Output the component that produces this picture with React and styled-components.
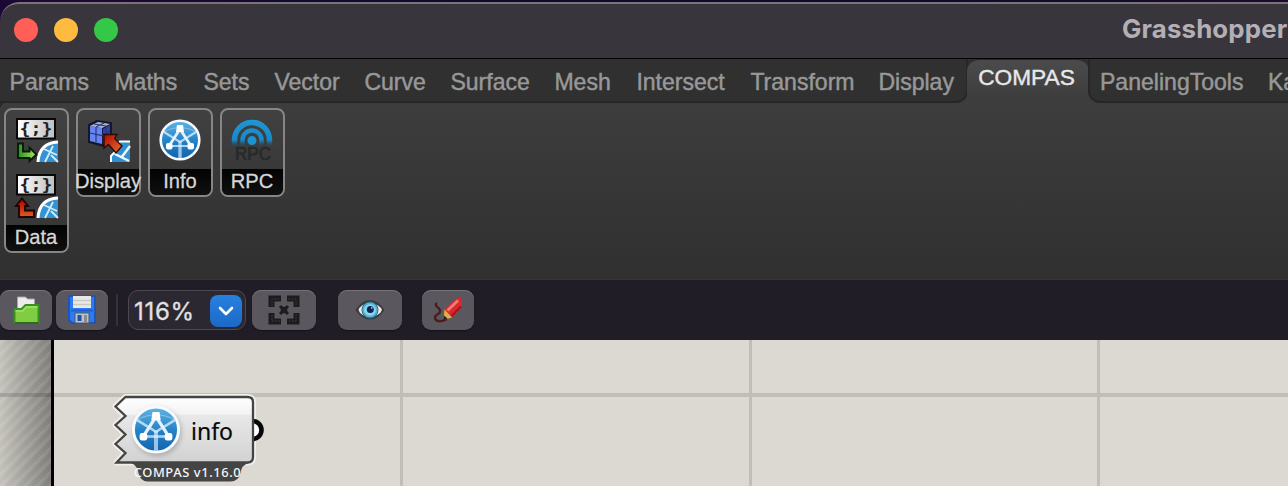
import React from "react";
import styled, { createGlobalStyle } from "styled-components";

const Global = createGlobalStyle`
  * { box-sizing: border-box; }
  body { margin: 0; overflow: hidden; background: #170b2c; }
`;

const sans = `"Liberation Sans", Arial, sans-serif`;
const ui = `Inter, "Noto Sans", sans-serif`;

const Desktop = styled.div`
  width: 1288px;
  height: 486px;
  padding-top: 2px;
  overflow: hidden;
  background: linear-gradient(90deg, #1c0834, #10082c 60%, #1b0a2c);
`;
const Window = styled.div`
  height: 484px;
  display: flex;
  flex-direction: column;
  border-top-left-radius: 19px;
  overflow: hidden;
`;
const TitleBar = styled.header`
  height: 57px;
  flex: none;
  display: flex;
  align-items: center;
  justify-content: space-between;
  padding: 0 0 2px 14px;
  white-space: nowrap;
  background: #39353c;
  border-top: 2px solid #77747a;
  border-top-left-radius: 19px;
  border-bottom: 1px solid #020202;
`;
const Lights = styled.div`
  display: flex;
  gap: 16px;
`;
const Light = styled.span`
  width: 24px;
  height: 24px;
  border-radius: 50%;
  background: ${(p) => p.$color};
`;
const Title = styled.h1`
  margin: 0;
  padding-bottom: 2px;
  width: 166px;
  font: 700 25.8px/32px ${ui};
  letter-spacing: 0.15px;
  color: #b3afb6;
`;

const TabBar = styled.nav`
  height: 44px;
  flex: none;
  display: flex;
  background: #3d3d3d;
`;
const TabGroup = styled.div`
  display: flex;
  flex: none;
  width: ${(p) => p.$width}px;
  overflow: hidden;
  background: #303030;
  border: 0 solid #272727;
  border-bottom-width: 2px;
  ${(p) =>
    p.$side === "left"
      ? "border-right-width: 2px; border-bottom-right-radius: 12px;"
      : "border-left-width: 2px; border-bottom-left-radius: 12px;"}
`;
const Tab = styled.button`
  flex: none;
  width: ${(p) => p.$width}px;
  padding: 0 0 0 ${(p) => p.$inset || 0}px;
  border: 0;
  background: none;
  text-align: left;
  white-space: nowrap;
  color: #989898;
  font: 23.05px/46px ${sans};
  -webkit-text-stroke: 0.45px #989898;
`;
const ActiveSlot = styled.div`
  width: 120px;
  flex: none;
  background: linear-gradient(#303030 24px, #3d3d3d 24px);
`;
const ActiveTab = styled.button`
  width: 122px;
  height: 44px;
  margin: 0 -1px;
  padding: 0 3px 9px 0;
  border: 0;
  border-top: 1px solid #292929;
  border-radius: 12px 12px 0 0;
  background: linear-gradient(#4b4b4b, #3d3d3d 90%);
  color: #e8e8e8;
  font: 22.7px/34px ${sans};
  -webkit-text-stroke: 0.4px #e8e8e8;
`;

const Ribbon = styled.section`
  height: 177px;
  flex: none;
  display: flex;
  align-items: flex-start;
  gap: 7px;
  padding: 5px 4px;
  background:
    radial-gradient(circle at 8px 6px, transparent 7px, #272727 7.5px 9px, #303030 9.5px) 0 0 / 5px 4px no-repeat,
    linear-gradient(#3d3d3d, #303030);
  border-bottom: 1px solid #353535;
`;
const Panel = styled.div`
  width: 65px;
  flex: none;
  display: flex;
  flex-direction: column;
  align-items: center;
  border: 2px solid #868686;
  border-radius: 8px;
  background: linear-gradient(#414141, #353535);
`;
const PanelIcons = styled.div`
  display: flex;
  flex-direction: column;
  gap: 8px;
  padding: 6px 1px 5px 0;
  svg { display: block; }
`;
const PanelLabel = styled.div`
  height: 26px;
  width: 61px;
  padding-right: 1px;
  display: flex;
  justify-content: center;
  border-radius: 0 0 6px 6px;
  background: linear-gradient(#030303, #101010);
  color: #d6d6d6;
  font: 20.1px/24px ${sans};
  -webkit-text-stroke: 0.3px #d6d6d6;
`;

const Toolbar = styled.div`
  height: 60px;
  flex: none;
  display: flex;
  align-items: center;
  background: #201d26;
`;
const ToolButton = styled.button`
  width: ${(p) => p.$width}px;
  height: 40px;
  flex: none;
  margin-right: ${(p) => p.$gap}px;
  display: flex;
  align-items: center;
  justify-content: center;
  padding: 0;
  border: 0;
  border-radius: 9px;
  background: #5a575e;
  box-shadow: inset 0 1px 0 #747178, 0 1px 1px #15131a;
`;
const Divider = styled.span`
  width: 2px;
  height: 32px;
  margin: 0 10px 0 8px;
  background: #35323b;
`;
const ZoomSelect = styled.div`
  width: 118px;
  height: 40px;
  margin-right: 6px;
  padding: 1px 3px 0 5px;
  display: flex;
  align-items: center;
  justify-content: space-between;
  border: 1px solid #4b4850;
  border-radius: 10px;
  background: #2b2831;
  color: #e1e0e2;
  font: 400 24px/36px ${ui};
  letter-spacing: 0.7px;
  -webkit-text-stroke: 0.3px #e1e0e2;
`;
const ZoomValue = styled.span`
  padding-top: 2px;
`;
const ZoomArrow = styled.span`
  width: 32px;
  height: 32px;
  display: grid;
  place-items: center;
  border-radius: 8px;
  background: linear-gradient(#2880e0, #1c69c6);
`;

const Canvas = styled.main`
  flex: 1;
  display: flex;
  background: #dcd9d2;
`;
const OuterMargin = styled.div`
  width: 54px;
  flex: none;
  border-right: 3px solid #000;
  background:
    linear-gradient(transparent 53px, rgba(0, 0, 0, 0.14) 53px 57px, transparent 57px),
    repeating-linear-gradient(135deg, rgba(255, 255, 255, 0.08) 0 4px, rgba(0, 0, 0, 0.01) 4px 8.5px),
    linear-gradient(90deg, #c5c3bc, #82807b);
`;
const Surface = styled.div`
  flex: 1;
  position: relative;
  background: linear-gradient(transparent 53px, #c1beb8 53px 57px, transparent 57px);
`;
const GridColumns = styled.div`
  height: 100%;
  display: grid;
  grid-template-columns: 349px 349px 348px 1fr;
`;
const GridColumn = styled.div`
  border-right: 3px solid #c1beb8;
  &:last-child { border-right: 0; }
`;
const Node = styled.div`
  position: absolute;
  left: 52px;
  top: 50px;
  width: 170px;
  height: 96px;
`;
const NodeShape = styled.svg`
  position: absolute;
  inset: 0;
`;
const NodeName = styled.span`
  position: absolute;
  left: 85px;
  top: 25px;
  font: 23px/32px "Noto Sans", sans-serif;
  -webkit-text-stroke: 0.2px #080808;
  color: #080808;
`;
const NodeMessage = styled.span`
  position: absolute;
  left: 28px;
  top: 73px;
  width: 107px;
  display: flex;
  justify-content: center;
  overflow: hidden;
  white-space: nowrap;
  font: 500 12.9px/19px "Noto Sans", sans-serif;
  letter-spacing: 0.6px;
  color: #f6f6f6;
`;

function CompasMark({ id }) {
  return (
    <g>
      <circle r="19.3" fill={`url(#${id})`} stroke="#f7fbff" strokeWidth="2.6" />
      <g stroke="#e3f2fc" fill="none">
        <path d="M-17-8 Q0-17 17-8" strokeWidth="1" opacity=".35" />
        <path d="M-16-8 L0 2 L16-8" strokeWidth="2.2" opacity=".75" />
        <path d="M0-11 L-11 6 M0-11 L11 6" strokeWidth="2.8" />
        <path d="M-11 6 H11" strokeWidth="2.2" opacity=".75" />
        <path d="M0 1 V18" strokeWidth="3.4" opacity=".65" />
      </g>
      <g fill="#fff">
        <path d="M-3-15 H3 L4-8 H-4 Z" />
        <rect x="-14" y="3" width="6.5" height="6.5" rx="2" />
        <rect x="7.5" y="3" width="6.5" height="6.5" rx="2" />
      </g>
    </g>
  );
}

function BlueFill({ id }) {
  return (
    <linearGradient id={id} x1="0" y1="0" x2="0" y2="1">
      <stop offset="0" stopColor="#62b5e4" />
      <stop offset=".5" stopColor="#2584c9" />
      <stop offset="1" stopColor="#1262ae" />
    </linearGradient>
  );
}

const Quarter = () => (
  <g>
    <path d="M26 46 Q27 27 46 26 V46 Z" fill="#3493d3" />
    <path d="M26 46 Q27 27 46 26" fill="none" stroke="#fff" strokeWidth="3" />
    <path d="M32 33 L45 39 M41 30 L33 46 M39 39 L46 46" stroke="#d4ecfa" strokeWidth="1.8" />
  </g>
);

function DataIcon({ up }) {
  const id = up ? "redArrow" : "greenArrow";
  return (
    <svg width="48" height="48" viewBox="0 0 48 48">
      <defs>
        <linearGradient id={id} x1="0" y1="0" x2={up ? 0 : 1} y2={up ? 1 : 0}>
          <stop offset="0" stopColor={up ? "#a50000" : "#21941a"} />
          <stop offset="1" stopColor={up ? "#e35b20" : "#b2e36b"} />
        </linearGradient>
        <linearGradient id={`${id}Paper`}>
          <stop offset="0" stopColor="#fff" />
          <stop offset="1" stopColor="#bebebe" />
        </linearGradient>
      </defs>
      <rect x="5" y="3" width="38" height="19.5" fill={`url(#${id}Paper)`} stroke="#080808" strokeWidth="2" />
      <text x="24" y="17.8" textAnchor="middle" textLength="33" lengthAdjust="spacingAndGlyphs" fontFamily="DejaVu Sans Mono, monospace" fontWeight="700" fontSize="16" fill="#222">{"{;}"}</text>
      {up ? (
        <path d="M10 26.5 L16 34 H13 V38.5 H22 V45 H7 V34 H4 Z" fill={`url(#${id})`} stroke="#1d0400" strokeWidth="1.9" />
      ) : (
        <path d="M6 27.5 H11 V35.5 H17.5 V31.5 L24.5 38.5 L17.5 45 V42 H6 Z" fill={`url(#${id})`} stroke="#071c04" strokeWidth="1.9" />
      )}
      <Quarter />
    </svg>
  );
}

const DisplayIcon = () => (
  <svg width="48" height="48" viewBox="0 0 48 48">
    <defs>
      <linearGradient id="pointer" x1="0" y1="0" x2="1" y2="1">
        <stop offset="0" stopColor="#b10800" />
        <stop offset="1" stopColor="#e87030" />
      </linearGradient>
    </defs>
    <path d="M5 9 L13 5 L27 7 V22 L20 30 L5 26 Z" fill="#171b38" stroke="#15182d" strokeWidth="2" />
    <path d="M6 10 L18 12 V28 L6 25 Z" fill="#6685f2" />
    <path d="M6 10 L14 6 L26 8 L18 12 Z" fill="#a9b5d0" />
    <path d="M19 13 L26 9 V22 L19 28 Z" fill="#3041a4" />
    <path d="M12 11 V26 M6 17 L18 19.5 L26 15 M22 11 V25 M10 8 L22 10 M12 11 L20 7" stroke="#273780" strokeWidth="1.2" fill="none" />
    <path d="M27 46 V40 L31 36 V30 L36 25.5 H46 V46 Z" fill="#2f91d3" />
    <path d="M27 46 V40 L31 36 V30 L36 25.5 H46" stroke="#fff" strokeWidth="2" fill="none" />
    <path d="M37 42 L46 30 M31 38 L45 45" stroke="#eff9ff" strokeWidth="2.5" />
    <path d="M20 18.5 L33 18.5 L30.5 22.5 L38 30 L32 37 L24.5 28.5 L20 32 Z" fill="url(#pointer)" stroke="#2b0b04" strokeWidth="1.4" />
  </svg>
);

const InfoIcon = () => (
  <svg width="48" height="48" viewBox="-24 -24 48 48">
    <defs><BlueFill id="infoBlue" /></defs>
    <CompasMark id="infoBlue" />
  </svg>
);

const RpcIcon = () => (
  <svg width="48" height="48" viewBox="0 0 48 48">
    <defs>
      <linearGradient id="signal" gradientUnits="userSpaceOnUse" x1="0" y1="4" x2="0" y2="32">
        <stop offset="0" stopColor="#2196d4" />
        <stop offset=".72" stopColor="#1689c8" />
        <stop offset="1" stopColor="#253a45" stopOpacity="0" />
      </linearGradient>
    </defs>
    <g fill="none" stroke="url(#signal)" strokeWidth="5.5">
      <path d="M6.5 30 V24 A17.5 17.5 0 0 1 41.5 24 V30" />
      <path d="M14.5 30 V24 A9.5 9.5 0 0 1 33.5 24 V30" strokeWidth="4.5" />
    </g>
    <circle cx="24" cy="24.5" r="4.5" fill="#1993d4" />
    <text x="25" y="44" textAnchor="middle" textLength="36" lengthAdjust="spacingAndGlyphs" fontFamily="Liberation Sans, sans-serif" fontSize="18" stroke="#282929" strokeWidth=".7" fill="#282929">RPC</text>
  </svg>
);

const OpenIcon = () => (
  <svg width="27" height="32" viewBox="1.5 0 27 32">
    <path d="M6 14 V3 H14 L16 5 H23 V16 H6 Z" fill="#ececec" stroke="#a5a5a5" />
    <path d="M3 29 V15 H10 L14 11 H27 V29 Z" fill="#80cd43" stroke="#359322" strokeWidth="2" />
    <path d="M4 17 H11 L15 13 H26" stroke="#a4e06b" strokeWidth="1.5" fill="none" />
    <path d="M3 29 H27" stroke="#276f1b" strokeWidth="2" />
  </svg>
);

const SaveIcon = () => (
  <svg width="32" height="32" viewBox="0 0 32 32">
    <path d="M3 2 H29 V29 H6 L3 26 Z" fill="#2c7bf0" stroke="#2054b8" strokeWidth="2" />
    <rect x="7" y="2" width="18" height="12" fill="#e8e8e5" />
    <path d="M7 6.5 H25 M7 10.5 H25" stroke="#c9cac7" strokeWidth="1.5" />
    <path d="M5 16.5 H27" stroke="#1f5ece" strokeWidth="2" />
    <rect x="9" y="19" width="14" height="10" fill="#bfc2c5" stroke="#4b5970" />
    <rect x="11.5" y="21" width="4" height="6" fill="#1653b5" />
    <path d="M19.5 21 V29" stroke="#8a8c90" strokeWidth="3" />
  </svg>
);

const FitIcon = () => (
  <svg width="32" height="32" viewBox="0 0 32 32">
    <g fill="none" stroke="#1c1c1e" strokeWidth="6">
      <path d="M3.5 13 V4.5 H13 M19 4.5 H28.5 V13 M28.5 19 V27.5 H19 M13 27.5 H3.5 V19" />
      <path d="M12 12 L20 20 M20 12 L12 20" strokeWidth="3" />
    </g>
    <rect x="12.8" y="12.8" width="6.4" height="6.4" fill="#1c1c1e" />
    <path d="M4 12 V5 H12 M20 5 H28 V12 M28 20 V27 H20 M12 27 H4 V20" fill="none" stroke="#38373b" strokeWidth="1" strokeDasharray="2 1" />
  </svg>
);

const EyeIcon = () => (
  <svg width="32" height="32" viewBox="0 0 32 32">
    <path d="M1.5 16 Q8 6 16 6 Q24 6 30.5 16 Q24 25.5 16 25.5 Q8 25.5 1.5 16 Z" fill="#39383c" />
    <path d="M4.5 16 Q6 10.5 16 9 Q26 10.5 28 16 Q26 21.5 16 23 Q6 21.5 4.5 16 Z" fill="#ece8e3" />
    <circle cx="16" cy="16" r="8" fill="#52b4d5" stroke="#28718f" />
    <circle cx="16" cy="16" r="5.8" fill="#8bd9f0" />
    <circle cx="16.3" cy="15.5" r="3.5" fill="#0d2450" />
    <circle cx="17.8" cy="14" r="0.8" fill="#e5fbff" />
  </svg>
);

const PencilIcon = () => (
  <svg width="32" height="32" viewBox="0 0 32 32">
    <path d="M5 9 Q2 11 6.5 14 Q10 18 6 20 Q1 23 4 26 Q8 29 15 25" fill="none" stroke="#4a1c1b" strokeWidth="2.4" />
    <path d="M12.5 15.5 L24 5 Q29 2 29.5 5 V13 L20 23.5 Z" fill="#d82a2a" />
    <path d="M15.5 16.5 L26 6.5" stroke="#f47a7a" strokeWidth="2.8" />
    <path d="M19.5 22 L29 12.5" stroke="#a51218" strokeWidth="2.2" />
    <path d="M12.5 15.5 L20 23.5 L11.5 26 Z" fill="#e4ad4b" />
    <path d="M12 21.5 L15.5 24.5 L11 27 Z" fill="#332015" />
  </svg>
);

const bodyPath =
  "M20 7 H142 Q147.5 7 147.5 12 V67 Q147.5 72.5 142 72.5 H11 L20 63 L10 54 L20 44.5 L10 35 L20 26 L10 16.5 Z";
const messagePath =
  "M26 73 H143 Q136 75 135 83 Q133 91.5 125 91.5 H42 Q35 91.5 33 83 Q32 76 26 73 Z";

const InfoNode = () => (
  <Node>
    <NodeShape width="170" height="96" viewBox="0.5 0 170 96">
      <defs>
        <linearGradient id="nodeBody" x1="0" y1="0" x2="0" y2="1">
          <stop offset="0" stopColor="#fff" />
          <stop offset=".26" stopColor="#f3f3f3" />
          <stop offset=".28" stopColor="#e8e8e8" />
          <stop offset="1" stopColor="#d2d2d2" />
        </linearGradient>
        <BlueFill id="nodeBlue" />
        <filter id="soft" x="-30%" y="-30%" width="160%" height="160%">
          <feGaussianBlur stdDeviation="2.5" />
        </filter>
      </defs>
      <path d={bodyPath} fill="none" stroke="#f0efec" strokeWidth="6" strokeLinejoin="round" />
      <circle cx="147" cy="40" r="9" fill="#fff" stroke="#050505" strokeWidth="4.6" />
      <path d={messagePath} fill="#444" />
      <path d={bodyPath} fill="url(#nodeBody)" stroke="#444" strokeWidth="2.3" />
      <circle cx="52" cy="42" r="24" fill="#777" opacity=".45" filter="url(#soft)" />
      <g transform="translate(50.5 39.5) scale(1.17)"><CompasMark id="nodeBlue" /></g>
    </NodeShape>
    <NodeName>info</NodeName>
    <NodeMessage>COMPAS v1.16.0</NodeMessage>
  </Node>
);

const tabs = [
  ["Params", 104],
  ["Maths", 89],
  ["Sets", 71],
  ["Vector", 90],
  ["Curve", 86],
  ["Surface", 104],
  ["Mesh", 82],
  ["Intersect", 114],
  ["Transform", 128],
  ["Display", 80],
];

export default function App() {
  return (
    <Desktop>
      <Global />
      <Window>
        <TitleBar>
          <Lights>
            <Light $color="#ff5f57" />
            <Light $color="#ffbb40" />
            <Light $color="#34c748" />
          </Lights>
          <Title>Grasshopper</Title>
        </TitleBar>
        <TabBar>
          <TabGroup $side="left" $width={968}>
            {tabs.map(([name, width], i) => (
              <Tab key={name} $width={i ? width : width + 10} $inset={i ? 0.4 : 9.6}>{name}</Tab>
            ))}
          </TabGroup>
          <ActiveSlot><ActiveTab>COMPAS</ActiveTab></ActiveSlot>
          <TabGroup $side="right" $width={200}>
            <Tab $width={178} $inset={10}>PanelingTools</Tab>
            <Tab $width={110}>Ka</Tab>
          </TabGroup>
        </TabBar>
        <Ribbon>
          <Panel>
            <PanelIcons><DataIcon /><DataIcon up /></PanelIcons>
            <PanelLabel>Data</PanelLabel>
          </Panel>
          <Panel>
            <PanelIcons><DisplayIcon /></PanelIcons>
            <PanelLabel>Display</PanelLabel>
          </Panel>
          <Panel>
            <PanelIcons><InfoIcon /></PanelIcons>
            <PanelLabel>Info</PanelLabel>
          </Panel>
          <Panel>
            <PanelIcons><RpcIcon /></PanelIcons>
            <PanelLabel>RPC</PanelLabel>
          </Panel>
        </Ribbon>
        <Toolbar>
          <ToolButton $width={52} $gap={4}><OpenIcon /></ToolButton>
          <ToolButton $width={52} $gap={0}><SaveIcon /></ToolButton>
          <Divider />
          <ZoomSelect>
            <ZoomValue>116%</ZoomValue>
            <ZoomArrow>
              <svg width="16" height="10" viewBox="0 0 16 10">
                <path d="M2 2 L8 8 L14 2" fill="none" stroke="#fff" strokeWidth="2.6" strokeLinecap="round" strokeLinejoin="round" />
              </svg>
            </ZoomArrow>
          </ZoomSelect>
          <ToolButton $width={64} $gap={22}><FitIcon /></ToolButton>
          <ToolButton $width={64} $gap={20}><EyeIcon /></ToolButton>
          <ToolButton $width={52} $gap={0}><PencilIcon /></ToolButton>
        </Toolbar>
        <Canvas>
          <OuterMargin />
          <Surface>
            <GridColumns>
              <GridColumn /><GridColumn /><GridColumn /><GridColumn />
            </GridColumns>
            <InfoNode />
          </Surface>
        </Canvas>
      </Window>
    </Desktop>
  );
}
